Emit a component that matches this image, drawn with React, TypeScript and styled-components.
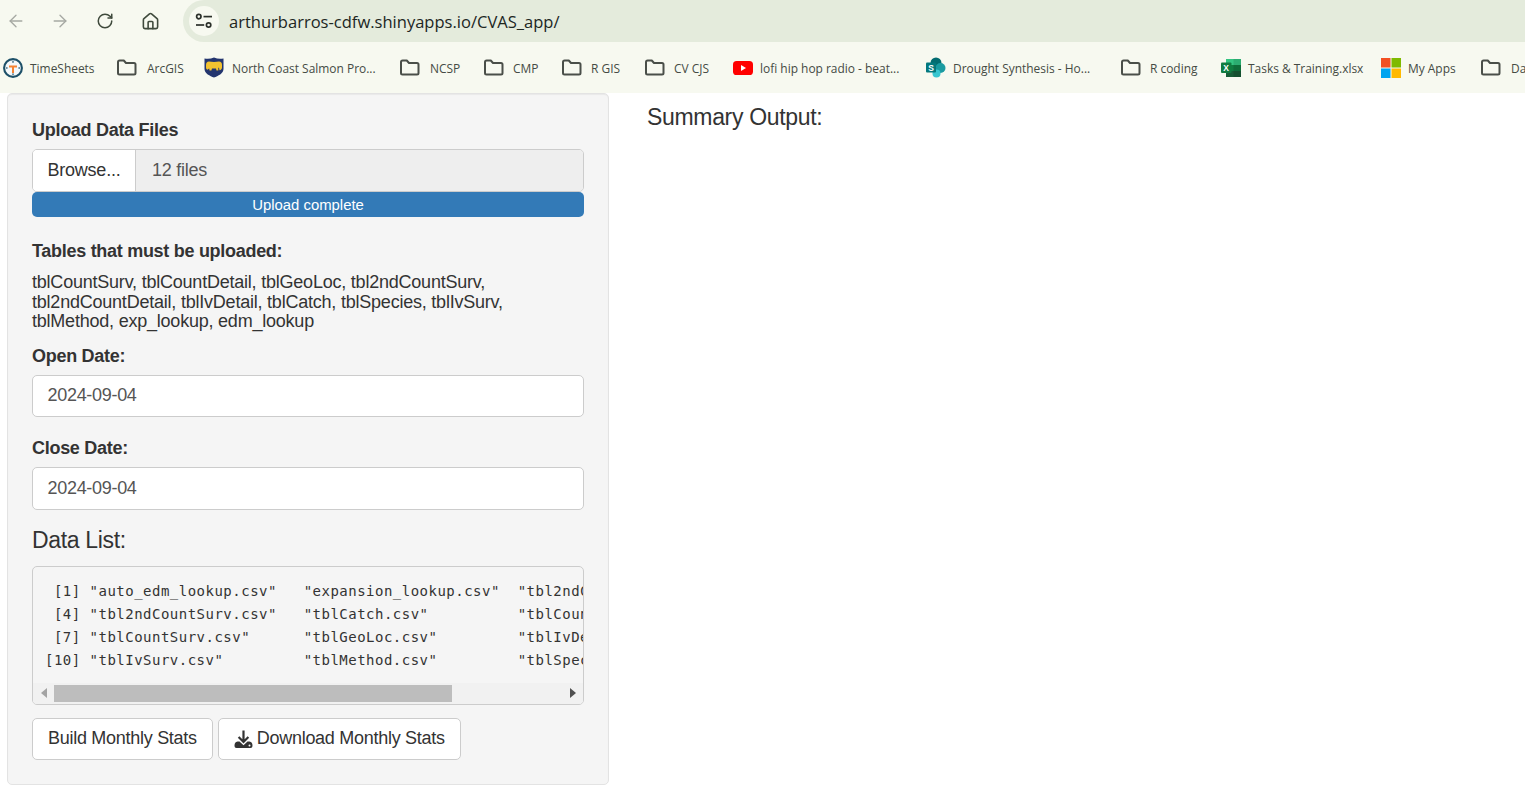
import React from "react";
import styled, { createGlobalStyle } from "styled-components";
import { ArrowLeft, ArrowRight, RotateCw, Home } from "lucide-react";

const Global = createGlobalStyle`
  html, body { margin: 0; padding: 0; background: #fff; }
  body { font-family: "Liberation Sans", Arial, sans-serif; color: #333; width: 1525px; height: 810px; overflow: hidden; }
  * { box-sizing: border-box; }
`;

const Page = styled.div`display: flex; flex-direction: column; width: 1525px; height: 810px; overflow: hidden;`;
const Toolbar = styled.div`display: flex; align-items: center; height: 42px; background: #f7f9f0; flex: none;`;
const NavButton = styled.div<{ $w: number; $dim?: boolean }>`
  width: ${p => p.$w}px; display: flex; justify-content: center; align-items: center;
  color: ${p => (p.$dim ? "#a6a9a3" : "#3f4a3c")};
`;
const NavGroup = styled.div`display: flex; align-items: center; width: 183px;`;
const UrlPill = styled.div`
  flex: 1; height: 42px; background: #e4ebdc; border-radius: 21px 0 0 21px;
  display: flex; align-items: center; padding-left: 6px; gap: 10px;
`;
const TuneBadge = styled.div`
  width: 30px; height: 30px; border-radius: 50%; background: #f7f9f0;
  display: flex; align-items: center; justify-content: center;
`;
const UrlText = styled.span`font-family: "Open Sans", sans-serif; font-size: 16.55px; line-height: 24px; padding-top: 1px; color: #20261f;`;

const BookmarkBar = styled.div`display: flex; align-items: center; height: 51px; background: #f7f9f0; flex: none; padding-left: 3px; overflow: hidden;`;
const Bookmark = styled.div<{ $w: number; $gap: number }>`
  flex: none; width: ${p => p.$w}px; display: flex; align-items: center; gap: ${p => p.$gap}px;
`;
const BookmarkLabel = styled.span`font-family: "Open Sans", sans-serif; font-size: 11.95px; line-height: 16px; padding-top: 2px; color: #454b44; white-space: nowrap;`;

const Main = styled.div`display: flex; flex: 1; padding-left: 7px; align-items: flex-start;`;
const Panel = styled.div`
  width: 602px; height: 692px; background: #f5f5f5; border: 1px solid #e3e3e3; border-radius: 5px;
  padding: 24px 24px 0; flex: none; box-shadow: inset 0 1px 1px rgba(0,0,0,.05);
`;
const Label = styled.div`font-weight: 700; font-size: 18px; line-height: 24px; color: #333; letter-spacing: -0.29px;`;
const FileRow = styled.div`display: flex; height: 43px; margin-top: 7px; border: 1px solid #ccc; border-radius: 5px; overflow: hidden;`;
const Browse = styled.div`width: 103px; background: #fff; border-right: 1px solid #ccc; display: flex; align-items: center; justify-content: center; font-size: 18px; letter-spacing: -0.25px;`;
const FileName = styled.div`flex: 1; background: #eee; display: flex; align-items: center; padding-left: 16px; font-size: 18px; color: #555; letter-spacing: -0.25px;`;
const Progress = styled.div`
  height: 25px; background: #337ab7; border-radius: 5px; color: #fff;
  font-size: 14.9px; display: flex; align-items: center; justify-content: center;
`;
const TablesLabel = styled(Label)`margin-top: 22px;`;
const Paragraph = styled.p`margin: 10px 0 0; font-size: 18px; line-height: 19.5px; color: #333; letter-spacing: -0.22px;`;
const DateLabel = styled(Label)<{ $top: number }>`margin-top: ${p => p.$top}px;`;
const DateInput = styled.div<{ $h: number }>`
  height: ${p => p.$h}px; margin-top: 7px; background: #fff; border: 1px solid #ccc; border-radius: 5px;
  display: flex; align-items: center; padding-left: 14.5px; font-size: 18px; color: #555; letter-spacing: -0.3px;
`;
const Heading = styled.div`font-size: 23px; line-height: 28px; color: #333; margin-top: 16px; letter-spacing: -0.33px;`;
const OutputBox = styled.div`margin-top: 12px; height: 139px; width: 552px; background: #f5f5f5; border: 1px solid #ccc; border-radius: 5px; overflow: hidden; display: flex; flex-direction: column;`;
const Pre = styled.pre`
  flex: 1; margin: 0; padding: 13px 0 0 12px; overflow: hidden; font-family: "DejaVu Sans Mono", monospace;
  font-size: 14px; line-height: 23px; color: #333; letter-spacing: 0.49px; white-space: pre;
`;
const Scrollbar = styled.div`height: 21px; background: #f1f1f1; display: flex; align-items: center; flex: none;`;
const ScrollArrow = styled.div<{ $right?: boolean }>`
  width: 21px; flex: none; display: flex; justify-content: center; color: ${p => (p.$right ? "#505050" : "#a3a3a3")};
`;
const Track = styled.div`flex: 1; height: 17px; align-self: flex-end; margin-bottom: 2px; display: flex;`;
const Thumb = styled.div`width: 398px; height: 100%; background: #bdbdbd;`;
const Buttons = styled.div`display: flex; gap: 5px; margin-top: 13px;`;
const Button = styled.div`
  height: 42px; background: #fff; border: 1px solid #ccc; border-radius: 5px; padding: 0 15px;
  display: flex; align-items: center; gap: 4px; font-size: 18px; color: #333; white-space: nowrap; letter-spacing: -0.28px;
`;
const RightColumn = styled.div`padding: 10px 0 0 38px; flex: 1;`;
const SummaryHeading = styled.div`font-size: 23px; line-height: 28px; color: #333; letter-spacing: -0.33px;`;

const Folder = () => (
  <svg width="21" height="17" viewBox="0 0 21 17" fill="none" stroke="#4a4f49" strokeWidth="2">
    <path d="M2 3.2C2 2 2.6 1.5 3.6 1.5H7.8L10 4H18C19 4 19.5 4.6 19.5 5.5V14C19.5 15 19 15.5 18 15.5H3.5C2.5 15.5 2 15 2 14Z" strokeLinejoin="round" />
  </svg>
);
const Clock = () => (
  <svg width="20" height="20" viewBox="0 0 20 20">
    <circle cx="10" cy="10" r="8.9" fill="#f4f8fa" stroke="#1d5068" strokeWidth="2.1" />
    <path d="M6 7.6h8v1.8h-3v5.6H9V9.4H6z" fill="#f58232" />
    <g fill="#1d5068">
      <rect x="9.4" y="3" width="1.2" height="1.8" />
      <rect x="9.4" y="15.4" width="1.2" height="1.6" />
      <rect x="3" y="9.4" width="1.6" height="1.2" />
      <rect x="15.4" y="9.4" width="1.6" height="1.2" />
    </g>
  </svg>
);
const Shield = () => (
  <svg width="20" height="21" viewBox="0 0 20 21">
    <path d="M0.5 1.5C4 2.2 7 1.8 10 .5C13 1.8 16 2.2 19.5 1.5V12C19.5 16.5 14 19 10 20.5C6 19 .5 16.5 .5 12Z" fill="#23356e" />
    <path d="M2 8C2 6 3 4.5 5 4.5C8 5 12 5 15 4.5C17 4.5 18 6 18 8V10.5C18 12 17 13 15.5 13.2L15 10.8H14.3V13.5H12.5L12 11.6H8L7.4 13.5H5.5L5.2 11.5L3.3 12.7C2.4 12 2 11.4 2 10.5Z" fill="#f2c230" />
  </svg>
);
const Youtube = () => (
  <svg width="20" height="14" viewBox="0 0 20 14">
    <rect width="20" height="14" rx="3.6" fill="#f00" />
    <path d="M8 4l5 3-5 3z" fill="#fff" />
  </svg>
);
const SharePoint = () => (
  <svg width="20" height="21" viewBox="0 0 20 21">
    <circle cx="10" cy="6" r="5.5" fill="#036c70" />
    <circle cx="14.5" cy="11" r="5" fill="#1a9ba1" />
    <circle cx="10.5" cy="16.5" r="4" fill="#37c6d0" />
    <rect x="0" y="5.5" width="10" height="10" rx="1" fill="#03787c" />
    <text x="5" y="13.6" fontSize="8.5" fontWeight="700" fill="#fff" textAnchor="middle" fontFamily="Liberation Sans">S</text>
  </svg>
);
const Excel = () => (
  <svg width="20" height="18" viewBox="0 0 20 18">
    <rect x="5" y="0" width="15" height="6" fill="#33c481" />
    <rect x="5" y="6" width="15" height="6" fill="#107c41" />
    <rect x="5" y="12" width="15" height="6" fill="#185c37" />
    <rect x="12.5" y="0" width="7.5" height="18" fill="#000" opacity=".12" />
    <rect x="0" y="3.5" width="10.5" height="10.5" rx="1" fill="#107c41" />
    <text x="5.2" y="11.8" fontSize="8.5" fontWeight="700" fill="#fff" textAnchor="middle" fontFamily="Liberation Sans">X</text>
  </svg>
);
const Microsoft = () => (
  <svg width="20" height="20" viewBox="0 0 20 20">
    <rect width="9.5" height="9.5" fill="#f25022" />
    <rect x="10.5" width="9.5" height="9.5" fill="#7fba00" />
    <rect y="10.5" width="9.5" height="9.5" fill="#00a4ef" />
    <rect x="10.5" y="10.5" width="9.5" height="9.5" fill="#ffb900" />
  </svg>
);
const Tune = () => (
  <svg width="18" height="16" viewBox="0 0 18 16" fill="none" stroke="#2b302a" strokeWidth="1.7">
    <circle cx="3.8" cy="3.6" r="2.2" />
    <path d="M8.5 3.6H17" />
    <circle cx="13.6" cy="12" r="2.2" />
    <path d="M1 12H9.2" />
  </svg>
);
const DownloadIcon = () => (
  <svg width="19" height="18" viewBox="0 0 19 18">
    <path d="M9.5 0.5V11.5M4.6 7L9.5 12L14.4 7" fill="none" stroke="#333" strokeWidth="2.2" strokeLinejoin="miter" />
    <path d="M0.5 15.5C0.5 13.2 1.5 12 3.5 11.5L5.5 11.5L9.5 15.2L13.5 11.5L15.5 11.5C17.5 12 18.5 13.2 18.5 15.5C18.5 17.2 17.8 18 16.5 18H2.5C1.2 18 .5 17.2 .5 15.5Z" fill="#333" />
    <circle cx="15.5" cy="15.4" r="1" fill="#fff" />
  </svg>
);

const bookmarks: { w: number; gap: number; icon: React.ReactNode; label: string }[] = [
  { w: 113, gap: 7, icon: <Clock />, label: "TimeSheets" },
  { w: 88, gap: 10, icon: <Folder />, label: "ArcGIS" },
  { w: 195, gap: 8, icon: <Shield />, label: "North Coast Salmon Pro..." },
  { w: 84, gap: 10, icon: <Folder />, label: "NCSP" },
  { w: 78, gap: 9, icon: <Folder />, label: "CMP" },
  { w: 83, gap: 9, icon: <Folder />, label: "R GIS" },
  { w: 89, gap: 9, icon: <Folder />, label: "CV CJS" },
  { w: 193, gap: 7, icon: <Youtube />, label: "lofi hip hop radio - beat..." },
  { w: 194, gap: 7, icon: <SharePoint />, label: "Drought Synthesis - Ho..." },
  { w: 101, gap: 9, icon: <Folder />, label: "R coding" },
  { w: 160, gap: 7, icon: <Excel />, label: "Tasks & Training.xlsx" },
  { w: 99, gap: 7, icon: <Microsoft />, label: "My Apps" },
  { w: 60, gap: 10, icon: <Folder />, label: "Da" },
];

const listing = ` [1] "auto_edm_lookup.csv"   "expansion_lookup.csv"  "tbl2ndCountDetail.csv"
 [4] "tbl2ndCountSurv.csv"   "tblCatch.csv"          "tblCountDetail.csv"
 [7] "tblCountSurv.csv"      "tblGeoLoc.csv"         "tblIvDetail.csv"
[10] "tblIvSurv.csv"         "tblMethod.csv"         "tblSpecies.csv"`;

export default function App() {
  return (
    <Page>
      <Global />
      <Toolbar>
        <NavGroup>
          <NavButton $w={32} $dim><ArrowLeft size={20} strokeWidth={1.6} /></NavButton>
          <NavButton $w={56} $dim><ArrowRight size={20} strokeWidth={1.6} /></NavButton>
          <NavButton $w={34}><RotateCw size={18} strokeWidth={2} /></NavButton>
          <NavButton $w={56}><Home size={19} strokeWidth={2} /></NavButton>
        </NavGroup>
        <UrlPill>
          <TuneBadge><Tune /></TuneBadge>
          <UrlText>arthurbarros-cdfw.shinyapps.io/CVAS_app/</UrlText>
        </UrlPill>
      </Toolbar>
      <BookmarkBar>
        {bookmarks.map(b => (
          <Bookmark key={b.label} $w={b.w} $gap={b.gap}>
            {b.icon}
            <BookmarkLabel>{b.label}</BookmarkLabel>
          </Bookmark>
        ))}
      </BookmarkBar>
      <Main>
        <Panel>
          <Label>Upload Data Files</Label>
          <FileRow>
            <Browse>Browse...</Browse>
            <FileName>12 files</FileName>
          </FileRow>
          <Progress>Upload complete</Progress>
          <TablesLabel>Tables that must be uploaded:</TablesLabel>
          <Paragraph>
            tblCountSurv, tblCountDetail, tblGeoLoc, tbl2ndCountSurv,<br />
            tbl2ndCountDetail, tblIvDetail, tblCatch, tblSpecies, tblIvSurv,<br />
            tblMethod, exp_lookup, edm_lookup
          </Paragraph>
          <DateLabel $top={12}>Open Date:</DateLabel>
          <DateInput $h={42}>2024-09-04</DateInput>
          <DateLabel $top={19}>Close Date:</DateLabel>
          <DateInput $h={43}>2024-09-04</DateInput>
          <Heading>Data List:</Heading>
          <OutputBox>
            <Pre>{listing}</Pre>
            <Scrollbar>
              <ScrollArrow>
                <svg width="6" height="10" viewBox="0 0 6 10"><path d="M6 0v10L0 5z" fill="currentColor" /></svg>
              </ScrollArrow>
              <Track><Thumb /></Track>
              <ScrollArrow $right>
                <svg width="6" height="10" viewBox="0 0 6 10"><path d="M0 0v10l6-5z" fill="currentColor" /></svg>
              </ScrollArrow>
            </Scrollbar>
          </OutputBox>
          <Buttons>
            <Button>Build Monthly Stats</Button>
            <Button><DownloadIcon />Download Monthly Stats</Button>
          </Buttons>
        </Panel>
        <RightColumn>
          <SummaryHeading>Summary Output:</SummaryHeading>
        </RightColumn>
      </Main>
    </Page>
  );
}
